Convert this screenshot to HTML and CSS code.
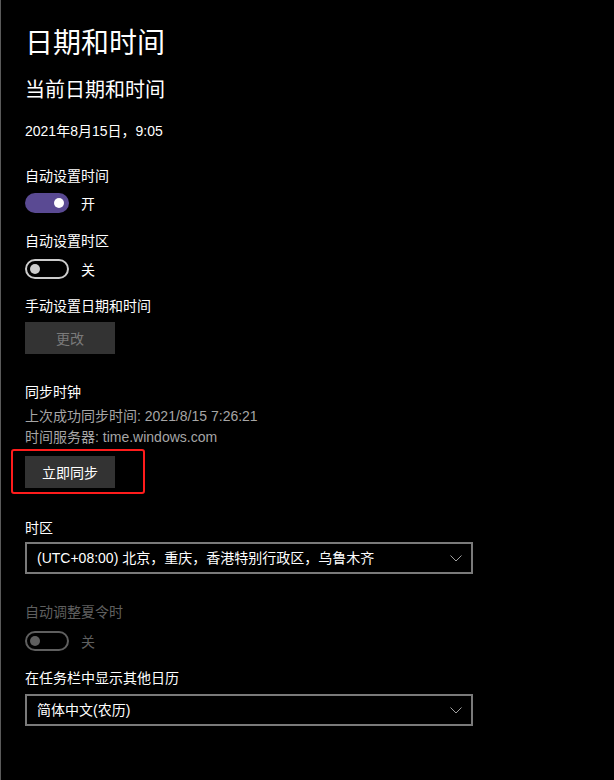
FILE: index.html
```html
<!DOCTYPE html>
<html lang="zh-CN">
<head>
<meta charset="utf-8">
<title>日期和时间</title>
<link rel="stylesheet" href="styles.css">
</head>
<body>
<main class="page">
  <h1 class="title cjk">日期和时间</h1>
  <h2 class="subtitle cjk">当前日期和时间</h2>
  <p class="text date">2021年8月15日，9:05</p>

  <p class="text cjk l-auto-time">自动设置时间</p>
  <div class="toggle-row tr-1">
    <span class="toggle on"><span class="knob"></span></span>
    <span class="toggle-text cjk">开</span>
  </div>

  <p class="text cjk l-auto-zone">自动设置时区</p>
  <div class="toggle-row tr-2">
    <span class="toggle off"><span class="knob"></span></span>
    <span class="toggle-text cjk">关</span>
  </div>

  <p class="text cjk l-manual">手动设置日期和时间</p>
  <button class="btn cjk btn-disabled b-change">更改</button>

  <p class="text cjk l-sync">同步时钟</p>
  <p class="text secondary s-1">上次成功同步时间: 2021/8/15 7:26:21</p>
  <p class="text secondary s-2">时间服务器: time.windows.com</p>
  <div class="sync-wrap">
    <button class="btn cjk b-sync">立即同步</button>
    <span class="highlight"></span>
  </div>

  <p class="text cjk l-zone">时区</p>
  <div class="select sel-1">
    <span class="select-text">(UTC+08:00) 北京，重庆，香港特别行政区，乌鲁木齐</span>
    <svg class="chevron" width="12" height="7" viewBox="0 0 12 7"><path d="M0.5 0.5 L6 6 L11.5 0.5" fill="none" stroke="#a0a0a0" stroke-width="1"/></svg>
  </div>

  <p class="text cjk disabled l-dst">自动调整夏令时</p>
  <div class="toggle-row tr-3">
    <span class="toggle off dis"><span class="knob"></span></span>
    <span class="toggle-text cjk disabled">关</span>
  </div>

  <p class="text cjk l-cal">在任务栏中显示其他日历</p>
  <div class="select sel-2">
    <span class="select-text">简体中文(农历)</span>
    <svg class="chevron" width="12" height="7" viewBox="0 0 12 7"><path d="M0.5 0.5 L6 6 L11.5 0.5" fill="none" stroke="#a0a0a0" stroke-width="1"/></svg>
  </div>
</main>
</body>
</html>
```
FILE: styles.css
```css
html, body {
  margin: 0;
  padding: 0;
  background: #000;
}
body {
  min-height: 100vh;
  border-left: 1px solid #5a5a5a;
  box-sizing: border-box;
  font-family: "Liberation Sans", "Noto Sans CJK SC", sans-serif;
  color: #fff;
}
.cjk {
  font-family: "Noto Sans CJK SC", "Liberation Sans", sans-serif;
}
.page {
  display: flex;
  flex-direction: column;
  align-items: flex-start;
  padding: 23px 0 0 24px;
}
.title {
  margin: 0;
  font-size: 28px;
  line-height: 36px;
  font-weight: 400;
}
.subtitle {
  margin: 16px 0 0;
  font-size: 20px;
  line-height: 28px;
  font-weight: 400;
}
.text {
  margin: 0;
  font-size: 14px;
  line-height: 20px;
}
.date { margin-top: 18px; }
.l-auto-time { margin-top: 24px; }
.l-auto-zone { margin-top: 17px; }
.l-manual { margin-top: 16px; }
.l-sync { margin-top: 27px; }
.s-1 { margin-top: 5px; }
.s-2 { margin-top: 1px; }
.l-zone { margin-top: 29px; }
.l-dst { margin-top: 27px; }
.l-cal { margin-top: 16px; }
.secondary { color: #a6a6a6; }
.disabled { color: #5f5f5f; }

.toggle-row {
  display: flex;
  align-items: center;
  gap: 12px;
  height: 20px;
}
.tr-1 { margin-top: 8px; }
.tr-2 { margin-top: 9px; }
.tr-3 { margin-top: 10px; }
.toggle {
  box-sizing: border-box;
  width: 44px;
  height: 20px;
  border-radius: 10px;
  display: flex;
  align-items: center;
  padding: 0 3px;
}
.toggle .knob {
  width: 10px;
  height: 10px;
  border-radius: 50%;
}
.toggle.on {
  background: #5a4a93;
  justify-content: flex-end;
  padding: 0 5px;
}
.toggle.on .knob { background: #fff; }
.toggle.off {
  border: 2px solid #cccccc;
  justify-content: flex-start;
}
.toggle.off .knob { background: #cccccc; }
.toggle.off.dis { border-color: #5f5f5f; }
.toggle.off.dis .knob { background: #5f5f5f; }
.toggle-text {
  font-size: 14px;
  line-height: 20px;
}

.btn {
  font-size: 14px;
  width: 90px;
  height: 32px;
  border: none;
  background: #333333;
  color: #fff;
  padding: 0;
  margin: 0;
}
.b-change { margin-top: 7px; }
.btn-disabled { color: #7a7a7a; }
.sync-wrap {
  position: relative;
  margin-top: 9px;
}
.b-sync { display: block; }
.highlight {
  position: absolute;
  left: -14px;
  top: -7px;
  width: 134px;
  height: 45px;
  box-sizing: border-box;
  border: 2px solid #ff1c1c;
  border-radius: 3px;
}

.select {
  box-sizing: border-box;
  width: 448px;
  height: 32px;
  border: 2px solid #7a7a7a;
  display: flex;
  align-items: center;
  justify-content: space-between;
  padding: 0 9px 0 10px;
}
.sel-1 { margin-top: 5px; }
.sel-2 { margin-top: 7px; }
.select-text {
  font-size: 14px;
  line-height: 20px;
}
.chevron { display: block; }
```
